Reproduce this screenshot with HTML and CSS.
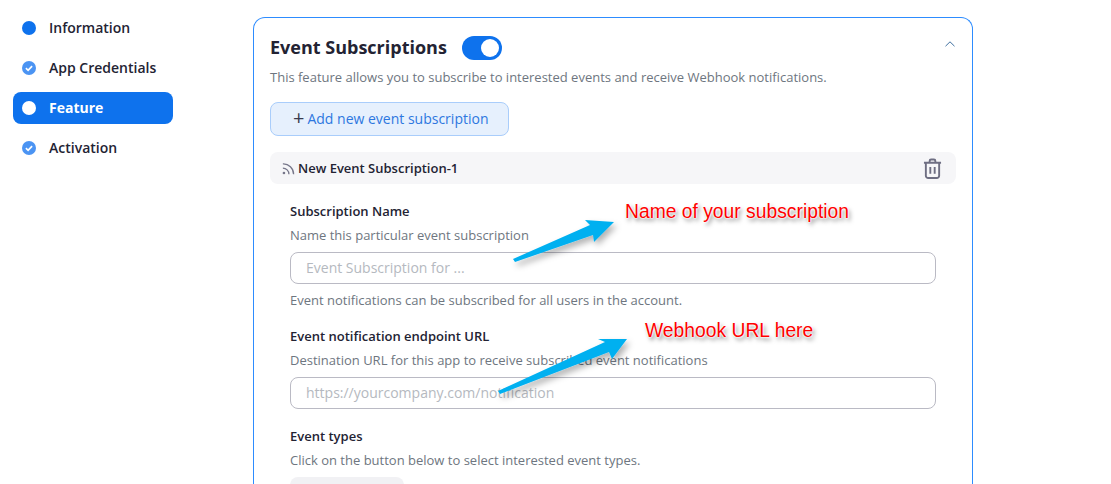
FILE: index.html
```html
<!DOCTYPE html>
<html lang="en">
<head>
    <meta charset="UTF-8">
    <title>Event Subscriptions</title>
    <link rel="stylesheet" href="styles.css">
</head>
<body>
    <div class="page">
        <nav class="sidebar">
            <a class="step"><span class="dot"></span>Information</a>
            <a class="step">
                <svg class="check" viewBox="0 0 14 14"><circle cx="7" cy="7" r="7" fill="#4b94f3"/><path d="M3.9 7.2l2.2 2.1 4-4.2" fill="none" stroke="#fff" stroke-width="1.7"/></svg>
                App Credentials
            </a>
            <a class="step active"><span class="dot"></span>Feature</a>
            <a class="step">
                <svg class="check" viewBox="0 0 14 14"><circle cx="7" cy="7" r="7" fill="#4b94f3"/><path d="M3.9 7.2l2.2 2.1 4-4.2" fill="none" stroke="#fff" stroke-width="1.7"/></svg>
                Activation
            </a>
        </nav>

        <main class="card">
            <div class="card-head">
                <h2>Event Subscriptions</h2>
                <span class="toggle"><span class="knob"></span></span>
                <svg class="chevron" viewBox="0 0 10 6"><path d="M.5 5.2L5 .8l4.5 4.4" fill="none" stroke="#3f6f9f" stroke-width="1"/></svg>
            </div>
            <p class="hint intro">This feature allows you to subscribe to interested events and receive Webhook notifications.</p>
            <button class="add-btn"><span class="plus">+</span>Add new event subscription</button>

            <div class="sub-bar">
                <span class="sub-title">
                    <svg class="rss" viewBox="0 0 12 12"><circle cx="1.8" cy="10.2" r="1.2" fill="#77778a"/><path d="M.8 5.600a5.600 5.600 0 0 1 5.600 5.600M.8 1.800a9.400 9.400 0 0 1 9.900 9.400" fill="none" stroke="#77778a" stroke-width="1.2"/></svg>
                    New Event Subscription-1
                </span>
                <svg class="trash" viewBox="0 0 20 22"><path d="M1 5h18M7 5V3a1.500 1.500 0 0 1 1.500-1.500h3A1.500 1.500 0 0 1 13 3v2M3 5v13.500A2.500 2.500 0 0 0 5.500 21h9a2.500 2.500 0 0 0 2.500-2.500V5M7.700 9.500v7M12.300 9.500v7" fill="none" stroke="#6e6e82" stroke-width="2"/></svg>
            </div>

            <div class="fields">
                <div class="field">
                    <label>Subscription Name</label>
                    <p class="hint">Name this particular event subscription</p>
                    <input type="text" placeholder="Event Subscription for ...">
                    <p class="hint below">Event notifications can be subscribed for all users in the account.</p>
                </div>
                <div class="field">
                    <label>Event notification endpoint URL</label>
                    <p class="hint">Destination URL for this app to receive subscribed event notifications</p>
                    <input type="text" placeholder="https://yourcompany.com/notification">
                </div>
                <div class="field">
                    <label>Event types</label>
                    <p class="hint">Click on the button below to select interested event types.</p>
                    <div class="grey-btn"></div>
                </div>
            </div>
        </main>
    </div>

    <!-- annotations drawn on top of the screenshot -->
    <svg class="arrows" width="1111" height="484">
        <defs>
            <filter id="soft" x="-20%" y="-30%" width="150%" height="170%">
                <feDropShadow dx="3" dy="4" stdDeviation="3" flood-color="#000" flood-opacity="0.3"/>
            </filter>
        </defs>
        <polygon filter="url(#soft)" fill="#00b0f0" points="513,259 590,225 585,220 614,222 594,242 593,235 515,262"/>
        <polygon filter="url(#soft)" fill="#00b0f0" points="498,391 605,342 598,339 627,339 612,359 609,352 500,394"/>
    </svg>
    <span class="note note-name">Name of your subscription</span>
    <span class="note note-url">Webhook URL here</span>
</body>
</html>
```

FILE: styles.css
```css
* {
    box-sizing: border-box;
}
html, body {
    height: 484px;
    overflow: hidden;
}
body {
    margin: 0;
    background-color: #fff;
    font-family: "Open Sans", "Noto Sans", sans-serif;
    color: #232333;
}
.page {
    display: flex;
    align-items: flex-start;
    height: 484px;
    overflow: hidden;
}
.sidebar {
    width: 253px;
    flex-shrink: 0;
    padding: 12px 80px 0 13px;
    display: flex;
    flex-direction: column;
    gap: 8px;
}
.step {
    display: flex;
    align-items: center;
    gap: 13px;
    height: 32px;
    padding: 0 0 2px 9px;
    border-radius: 8px;
    font-size: 14px;
    font-weight: 600;
}
.dot {
    width: 14px;
    height: 14px;
    margin-bottom: -2px;
    border-radius: 50%;
    background-color: #0e72ed;
}
.check {
    width: 14px;
    height: 14px;
    margin-bottom: -2px;
}
.step.active {
    background-color: #0e72ed;
    color: #fff;
    font-weight: 700;
}
.step.active .dot {
    background-color: #fff;
}
.card {
    width: 720px;
    height: 480px;
    margin-top: 17px;
    padding: 15px 16px 0;
    border: 1px solid #2d8cff;
    border-bottom: 0;
    border-radius: 12px 12px 0 0;
    overflow: hidden;
}
.card-head {
    display: flex;
    align-items: center;
    height: 30px;
}
.card-head h2 {
    margin: 0 0 2px;
    font-size: 18px;
    font-weight: 700;
}
.toggle {
    width: 40px;
    height: 24px;
    margin-left: 15px;
    padding: 3px;
    border-radius: 12px;
    background-color: #0e72ed;
    display: flex;
    justify-content: flex-end;
}
.knob {
    width: 18px;
    height: 18px;
    border-radius: 50%;
    background-color: #fff;
}
.chevron {
    width: 10px;
    height: 6px;
    margin-left: auto;
    margin-right: 1px;
    margin-top: -8px;
}
.hint {
    margin: 0;
    font-size: 13px;
    line-height: 18px;
    color: #6e7680;
}
.intro {
    margin-top: 5px;
}
.add-btn {
    display: flex;
    align-items: center;
    width: 239px;
    height: 34px;
    margin-top: 16px;
    padding: 0 0 2px 22px;
    border: 1px solid #a9cdfb;
    border-radius: 8px;
    background-color: #e6f0fd;
    color: #2d77e0;
    font-family: inherit;
    font-size: 14px;
}
.plus {
    color: #39394d;
    font-size: 20px;
    line-height: 18px;
    margin-right: 3px;
}
.sub-bar {
    display: flex;
    align-items: center;
    justify-content: space-between;
    height: 32px;
    margin-top: 16px;
    padding: 0 14px 0 12px;
    border-radius: 8px;
    background-color: #f6f6f8;
}
.sub-title {
    display: flex;
    align-items: center;
    gap: 3px;
    font-size: 13px;
    font-weight: 600;
}
.rss {
    width: 13px;
    height: 13px;
}
.trash {
    width: 19px;
    height: 21px;
}
.fields {
    padding: 0 20px;
}
.field {
    padding-top: 17px;
}
.field label {
    display: block;
    font-size: 13px;
    line-height: 20px;
    font-weight: 600;
    margin-bottom: 5px;
}
.field input {
    display: block;
    width: 646px;
    height: 32px;
    margin-top: 8px;
    padding: 0 15px 2px;
    border: 1px solid #babac4;
    border-radius: 8px;
    font-family: inherit;
    font-size: 14px;
}
.field input::placeholder {
    color: #b5b9c0;
}
.below {
    margin-top: 7px;
}
.grey-btn {
    width: 114px;
    height: 32px;
    margin-top: 8px;
    border-radius: 8px;
    background-color: #f1f1f4;
}
.arrows {
    position: absolute;
    left: 0;
    top: 0;
    pointer-events: none;
}
.note {
    position: absolute;
    font-family: "Liberation Sans", Arial, sans-serif;
    font-size: 19.3px;
    line-height: 22px;
    color: #f00;
    white-space: nowrap;
    text-shadow: 0 0 2px #fff, 0 0 2px #fff, 0 0 2px #fff, 2px 3px 4px rgba(0, 0, 0, 0.5);
}
.note-name {
    left: 625px;
    top: 201px;
}
.note-url {
    left: 645px;
    top: 320px;
}
```
